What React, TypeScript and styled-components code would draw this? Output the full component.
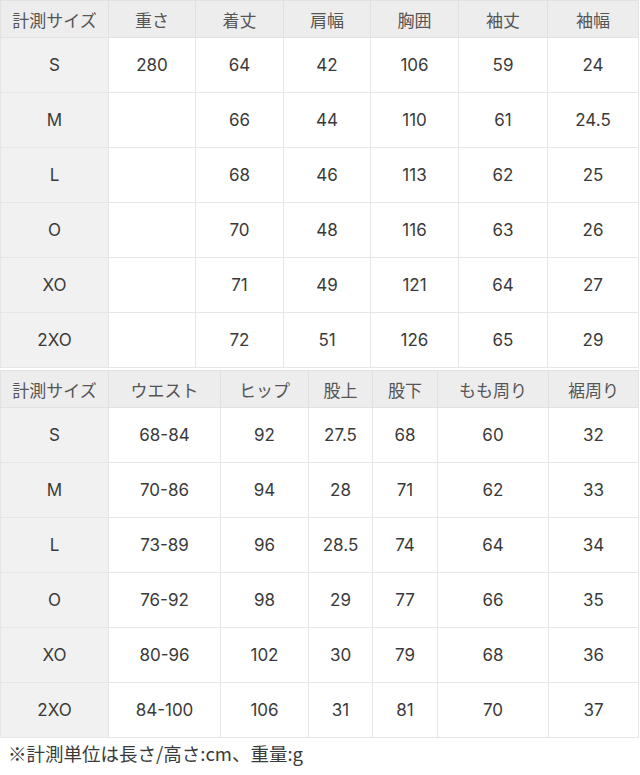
import React from 'react';
import styled, { createGlobalStyle } from 'styled-components';

const GlobalStyle = createGlobalStyle`
  body {
    margin: 0;
    background: #ffffff;
    font-family: 'Inter', 'Noto Sans CJK JP', sans-serif;
  }
`;

const Page = styled.div`
  width: 640px;
  display: flex;
  flex-direction: column;
  gap: 2px;
`;

const Table = styled.table`
  width: 638px;
  table-layout: fixed;
  border-collapse: collapse;
  border: 1px solid #e4e4e4;
  color: #333;
`;

const HeadCell = styled.th`
  height: 36px;
  padding: 0;
  background: #ededed;
  border: 1px solid #e2e2e2;
  font-family: 'Noto Sans CJK JP', sans-serif;
  font-size: 17px;
  font-weight: 400;
  color: #555;
  text-align: center;
  vertical-align: middle;
`;

const Cell = styled.td<{ $label?: boolean }>`
  height: 54px;
  padding: 0;
  background: ${({ $label }) => ($label ? '#f1f1f1' : '#ffffff')};
  border: 1px solid #e6e6e6;
  font-size: 17px;
  font-weight: 400;
  color: #3a3a3a;
  text-align: center;
  vertical-align: middle;
`;

const Note = styled.p`
  margin: 0 0 0 8px;
  font-family: 'Noto Sans CJK JP', sans-serif;
  font-size: 18.5px;
  color: #3a3a3a;
`;

type SizeTable = {
  widths: number[];
  head: string[];
  rows: string[][];
};

const tops: SizeTable = {
  widths: [108, 87, 88, 87, 88, 89, 91],
  head: ['計測サイズ', '重さ', '着丈', '肩幅', '胸囲', '袖丈', '袖幅'],
  rows: [
    ['S', '280', '64', '42', '106', '59', '24'],
    ['M', '', '66', '44', '110', '61', '24.5'],
    ['L', '', '68', '46', '113', '62', '25'],
    ['O', '', '70', '48', '116', '63', '26'],
    ['XO', '', '71', '49', '121', '64', '27'],
    ['2XO', '', '72', '51', '126', '65', '29'],
  ],
};

const bottoms: SizeTable = {
  widths: [108, 112, 88, 64, 65, 111, 90],
  head: ['計測サイズ', 'ウエスト', 'ヒップ', '股上', '股下', 'もも周り', '裾周り'],
  rows: [
    ['S', '68-84', '92', '27.5', '68', '60', '32'],
    ['M', '70-86', '94', '28', '71', '62', '33'],
    ['L', '73-89', '96', '28.5', '74', '64', '34'],
    ['O', '76-92', '98', '29', '77', '66', '35'],
    ['XO', '80-96', '102', '30', '79', '68', '36'],
    ['2XO', '84-100', '106', '31', '81', '70', '37'],
  ],
};

const Sizes = ({ data }: { data: SizeTable }) => (
  <Table>
    <colgroup>
      {data.widths.map((w, i) => (
        <col key={i} style={{ width: w }} />
      ))}
    </colgroup>
    <thead>
      <tr>
        {data.head.map((h) => (
          <HeadCell key={h}>{h}</HeadCell>
        ))}
      </tr>
    </thead>
    <tbody>
      {data.rows.map((row) => (
        <tr key={row[0]}>
          {row.map((v, i) => (
            <Cell key={i} $label={i === 0}>
              {v}
            </Cell>
          ))}
        </tr>
      ))}
    </tbody>
  </Table>
);

const App = () => (
  <>
    <GlobalStyle />
    <Page>
      <Sizes data={tops} />
      <Sizes data={bottoms} />
      <Note>※計測単位は長さ/高さ:cm、重量:g</Note>
    </Page>
  </>
);

export default App;
